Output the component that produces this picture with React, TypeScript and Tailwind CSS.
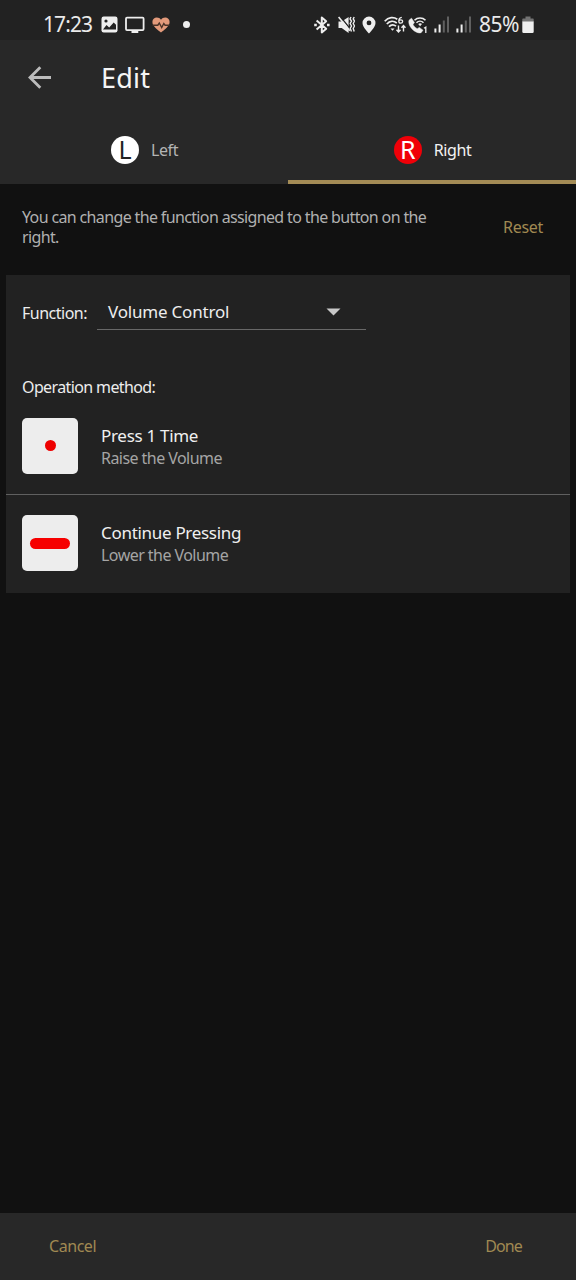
import { useState } from 'react';
import type { ReactNode } from 'react';

type Side = 'left' | 'right';

/** Four bars, the first `level` of them lit. */
function SignalBars({ level }: { level: number }) {
  const heights = [4, 8, 12, 16];
  return (
    <svg width="16" height="17" viewBox="0 0 16 17" className="shrink-0">
      {heights.map((h, i) => (
        <rect key={h} x={i * 4.2 + 0.4} y={16.5 - h} width="2" height={h} fill={i < level ? '#eee' : '#606060'} />
      ))}
    </svg>
  );
}

function StatusBar() {
  return (
    <div className="flex h-10 items-start justify-between bg-[#222222] pr-[42px] pl-[43px] text-[#eaeaea]">
      <div className="flex h-[49px] items-center">
        <span className="w-[50px] pt-px text-[21px] tracking-[-0.9px] whitespace-nowrap">17:23</span>
        <svg width="17" height="17" viewBox="0 0 17 17" className="ml-2">
          <rect x="0.5" y="0.5" width="16" height="16" rx="2.2" fill="#eee" />
          <circle cx="5" cy="5" r="1.6" fill="#222" />
          <path d="M2 13.500 5.500 9l2.700 2.600 4.500-5 2.300 2.200v4.700z" fill="#222" />
        </svg>
        <svg width="20" height="18" viewBox="0 0 20 18" className="ml-[7px]">
          <rect x="1" y="1.7" width="17.6" height="12.4" rx="1" fill="none" stroke="#eee" strokeWidth="1.8" />
          <path d="M6.500 14h6.800v3H6.500z" fill="#eee" />
        </svg>
        <svg width="18" height="16" viewBox="0 0 18 16" className="ml-[7px]">
          <path d="M9 15.6C6 12.8.4 9.4.4 4.9.4 2.3 2.4.5 4.8.5 6.6.5 8 1.4 9 2.8 10 1.4 11.4.5 13.2.5c2.4 0 4.4 1.8 4.4 4.4 0 4.500-5.600 7.900-8.600 10.700z" fill="#e39a7b" />
          <path d="M.5 8.200h5.300l1.500-2.200 2.400 4.500 2.100-4 1.300 1.700h4.500" fill="none" stroke="#4b3328" strokeWidth="1.400" />
        </svg>
        <span className="ml-[13px] size-[7px] rounded-full bg-[#eeeeee]" />
      </div>

      <div className="flex h-[49px] items-center">
        <svg width="16" height="18" viewBox="0 0 16 18" fill="none" stroke="#eee" strokeWidth="2">
          <path d="M2.600 4.500 12.200 12.800l-4.400 3.600V1.600l4.400 3.600-9.600 8.300" strokeLinejoin="round" />
          <path d="M.2 9h2.600M13 9h2.600" strokeWidth="2.400" />
        </svg>
        <svg width="17" height="18" viewBox="0 0 17 18" fill="#eee" className="ml-2">
          <path d="M.5 5.500h3.200L10.600 1v16l-6.900-5H.5z" />
          <path d="M2.200.500 12 12.500" stroke="#222" strokeWidth="1.200" />
          <path d="M.6 1 11.800 14.800" stroke="#eee" strokeWidth="1.600" />
          <path d="m13 1-1 2 1.500 2-1.300 2.500 1.300 2.500-1.300 2.500 1.300 3M16.200 1l-1 2 1.300 2-1.300 2.500 1.300 2.500-1.300 2.500 1 3" fill="none" stroke="#eee" strokeWidth="1.400" />
        </svg>
        <svg width="14" height="18" viewBox="0 0 14 18" className="ml-[7px]">
          <path fillRule="evenodd" d="M7 .5A6.500 6.500 0 0 0 .5 7c0 4.300 6.500 10.500 6.500 10.500S13.500 11.300 13.500 7A6.500 6.500 0 0 0 7 .5zm0 4a2.400 2.400 0 1 1 0 4.800 2.400 2.400 0 0 1 0-4.800z" fill="#eee" />
        </svg>
        <svg width="22" height="18" viewBox="0 0 22 18" fill="none" stroke="#eee" strokeWidth="1.700" className="ml-2">
          <path d="M.7 5.200C4.500.9 9.800.8 13.300 3.200M2.800 8c3-3.200 7-3.400 10-1M5 10.700c2-2.100 4.800-2.300 7-.5" />
          <path d="m6.500 12.500 2 2.200 2-2.200z" fill="#eee" stroke="none" />
          <path d="M17.800 1.300c-2 .2-3 1.500-3 3.700 0 1.400.7 2.200 1.900 2.200s1.900-.7 1.900-1.700-.7-1.600-1.800-1.600c-.9 0-1.600.4-2 1.100" strokeWidth="1.300" />
          <path d="M14.500 9.500V16m-2-2.200 2 2.200 2-2.200M19.500 15.500V9.500m-2 2.200 2-2.200 2 2.200" strokeWidth="1.400" />
        </svg>
        <svg width="20" height="18" viewBox="0 0 20 18" className="ml-0.5">
          <path d="M3.500 2.200 1.200 4c-1.300 2.700.7 6.800 3.300 9.400 2.800 2.700 6 4.100 8.600 3.300l1.900-2.500-3.700-2.800-2 1.300c-1.900-.9-3.300-2.300-4.300-4.300l1.400-1.900z" fill="#eee" stroke="#eee" strokeWidth="0.500" />
          <path d="M6.500 4.200c3-3 8-3 11 0M8.500 6.700c2-2 5-2 7 0" fill="none" stroke="#eee" strokeWidth="1.600" />
          <path d="m10.200 8 1.900 2.200L14 8c-1.100-1-2.700-1-3.800 0z" fill="#eee" />
          <path d="m16 12.300 1.800-1.200V17" fill="none" stroke="#eee" strokeWidth="1.300" />
        </svg>
        <div className="ml-[6px] flex gap-[6px]">
          <SignalBars level={2} />
          <SignalBars level={2} />
        </div>
        <span className="ml-[7px] w-[42px] pt-px text-[21px] tracking-[-0.5px] whitespace-nowrap">85%</span>
        <svg width="12" height="18" viewBox="0 0 12 18" className="ml-px">
          <path d="M3.500.5h5v2H11q.7 0 .7.700V6H.3V3.200q0-.7.700-.7h2.500z" fill="#737373" />
          <path d="M.3 5.500h11.400v10.300q0 1.200-1.200 1.200h-9q-1.200 0-1.200-1.200z" fill="#eee" />
        </svg>
      </div>
    </div>
  );
}

interface TabProps {
  letter: string;
  label: string;
  active: boolean;
  badge: string;
  onSelect: () => void;
}

function Tab({ letter, label, active, badge, onSelect }: TabProps) {
  return (
    <button
      type="button"
      role="tab"
      aria-selected={active}
      onClick={onSelect}
      className={`flex flex-1 items-center justify-center border-b-4 pt-1 pl-px ${active ? 'border-[#a48c56] text-[#f2f2f2]' : 'border-transparent text-[#b4b4b4]'}`}
    >
      <span className={`flex size-7 items-center justify-center rounded-full pb-0.5 text-[25px] leading-[26px] ${badge}`}>{letter}</span>
      <span className="ml-3 text-[16px] tracking-[-0.4px]">{label}</span>
    </button>
  );
}

function Operation({ title, detail, children }: { title: string; detail: string; children: ReactNode }) {
  return (
    <div className="flex items-center pl-4">
      <div className="flex size-14 items-center justify-center rounded-[5px] bg-[#ededed]">{children}</div>
      <div className="ml-[23px] pt-px">
        <p className="text-[17px] leading-[22px] tracking-[-0.3px] text-[#f0f0f0]">{title}</p>
        <p className="text-[16px] leading-[22px] tracking-[-0.55px] text-[#a5a5a5]">{detail}</p>
      </div>
    </div>
  );
}

export default function App() {
  const [side, setSide] = useState<Side>('right');

  return (
    <main className="flex h-screen w-full flex-col bg-[#111111] font-['Noto_Sans',sans-serif]">
      <StatusBar />

      <header className="h-36 bg-[#282828]">
        <div className="flex h-[76px] items-center pl-7">
          <button type="button" aria-label="Back">
            <svg width="24" height="24" viewBox="0 0 24 24" fill="none" stroke="#bcbcbc" strokeWidth="2.800">
              <path d="M23 11.500H2M12.300 1.200 2 11.500l10.300 10.300" />
            </svg>
          </button>
          <h1 className="ml-[49px] text-[27px] tracking-[0.2px] text-[#f5f5f5]">Edit</h1>
        </div>
        <div role="tablist" className="flex h-[68px]">
          <Tab letter="L" label="Left" active={side === 'left'} badge="bg-white text-[#222222]" onSelect={() => setSide('left')} />
          <Tab letter="R" label="Right" active={side === 'right'} badge="bg-[#f00008] text-white" onSelect={() => setSide('right')} />
        </div>
      </header>

      <section className="flex h-[91px] items-center justify-between pr-[33px] pb-[5px] pl-[22px]">
        <p className="w-[420px] text-[16px] leading-5 tracking-[-0.64px] text-[#b0b0b0]">
          You can change the function assigned to the button on the {side}.
        </p>
        <button type="button" className="text-[16px] tracking-[-0.3px] text-[#a08952]">
          Reset
        </button>
      </section>

      <section className="mx-1.5 h-[318px] bg-[#222222] pt-[19px]">
        <div className="flex pl-4 text-[#ededed]">
          <span className="w-[75px] pt-[7px] text-[16px] tracking-[-0.5px]">Function:</span>
          <button type="button" className="flex h-9 w-[269px] items-center justify-between border-b border-[#686868] pt-px pr-[25px] pl-[11px] text-[17px] tracking-[-0.2px]">
            Volume Control
            <svg width="15" height="8" viewBox="0 0 15 8">
              <path d="M.5.5h14l-7 7z" fill="#c8c8c8" />
            </svg>
          </button>
        </div>

        <h2 className="mt-[47px] pl-4 text-[16px] leading-5 tracking-[-0.62px] text-[#ededed]">Operation method:</h2>
        <div className="mt-[21px] border-b border-[#606060] pb-5">
          <Operation title="Press 1 Time" detail="Raise the Volume">
            <span className="mb-px size-[11px] rounded-full bg-[#ee0000]" />
          </Operation>
        </div>
        <div className="pt-5">
          <Operation title="Continue Pressing" detail="Lower the Volume">
            <span className="h-[11px] w-10 rounded-full bg-[#f60000]" />
          </Operation>
        </div>
      </section>

      <footer className="mt-auto flex h-[67px] items-center justify-between bg-[#282828] pr-[54px] pb-px pl-[49px] text-[16px] text-[#a08952]">
        <button type="button" className="tracking-[-0.45px]">Cancel</button>
        <button type="button" className="tracking-[-0.9px]">Done</button>
      </footer>
    </main>
  );
}
